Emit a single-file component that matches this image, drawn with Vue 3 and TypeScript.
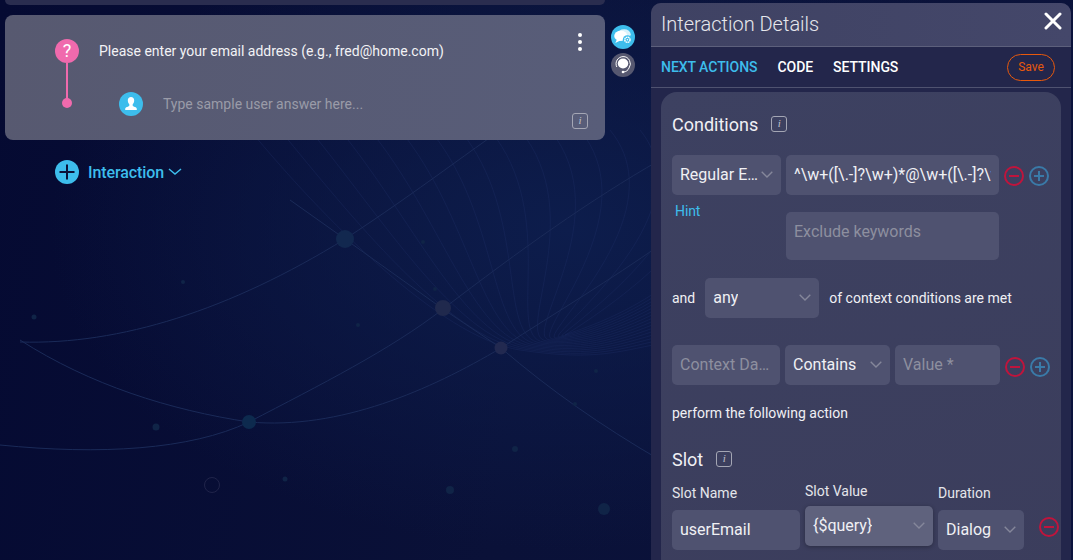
<script setup lang="ts">
// thin mesh of lines sweeping down to the right behind the page
const meshLines = Array.from({ length: 16 }, (_, i) => {
  const x = 250 + i * 30
  return `M${x} 130 C ${x + 70} 215 ${440 + i * 8} 338 ${520 + i * 3} ${350 - i} S 620 ${350 - i * 2} 670 ${342 - i * 4}`
})

const dots = [
  { x: 450, y: 490, r: 4 },
  { x: 604, y: 509, r: 6 },
  { x: 515, y: 449, r: 3 },
  { x: 156, y: 427, r: 3.5 },
  { x: 34, y: 317, r: 2.5 },
  { x: 285, y: 479, r: 2.5 },
  { x: 183, y: 282, r: 2 },
  { x: 358, y: 325, r: 2 },
  { x: 596, y: 371, r: 2 },
  { x: 575, y: 404, r: 2 },
  { x: 423, y: 242, r: 2 },
  { x: 435, y: 289, r: 2 },
]
</script>

<template>
  <div class="page">
    <svg class="bg-art" width="1073" height="560" viewBox="0 0 1073 560" fill="none">
      <path v-for="(d, i) in meshLines" :key="i" :d="d" stroke="#22346a" stroke-width="0.6" opacity="0.5" />
      <g stroke="#1a2a58" stroke-width="1">
        <path d="M20 342 C 120 345 230 310 345 239 C 420 190 470 150 530 110" />
        <path d="M0 445 C 100 455 190 450 249 422 C 320 385 390 350 443 309 C 520 250 590 200 660 160" />
        <path d="M20 340 C 90 385 170 410 249 422 C 340 430 430 390 501 348 C 560 310 610 280 660 245" />
        <path d="M290 200 L345 239 L443 309 L501 348 C 550 390 600 425 660 460" />
      </g>
      <circle cx="345" cy="239" r="9" fill="#12284f" />
      <circle cx="443" cy="308" r="8" fill="#20294d" />
      <circle cx="501" cy="348" r="6.500" fill="#222950" />
      <circle cx="249" cy="422" r="7" fill="#0d2a4e" />
      <circle cx="212" cy="485" r="7.500" stroke="#20244a" />
      <circle v-for="(p, i) in dots" :key="i" :cx="p.x" :cy="p.y" :r="p.r" fill="#102447" />
    </svg>

    <main class="canvas">
      <div class="prev-card"></div>

      <div class="card-row">
        <section class="card">
          <div class="timeline">
            <span class="question">?</span>
            <span class="stem"></span>
            <span class="stem-dot"></span>
          </div>

          <div class="card-body">
            <p class="prompt">Please enter your email address (e.g., fred@home.com)</p>
            <div class="answer">
              <span class="avatar">
                <svg width="16" height="16" viewBox="0 0 16 16" fill="#fff">
                  <path d="M8 1c2 0 3.200 1.400 3.200 3.500 0 1.500-.7 3-1.500 3.800v1.100c0 .6 1 1 2.300 1.500 1 .4 1.800.9 1.800 2.100v1H2.200v-1c0-1.200.8-1.700 1.800-2.100 1.300-.5 2.300-.9 2.300-1.500V8.300C5.500 7.500 4.800 6 4.800 4.500 4.800 2.400 6 1 8 1z" />
                </svg>
              </span>
              <span class="answer-hint">Type sample user answer here...</span>
            </div>
          </div>

          <div class="card-tools">
            <span class="kebab"><i></i><i></i><i></i></span>
            <span class="info-box">i</span>
          </div>
        </section>

        <div class="side-icons">
          <span class="side-icon active">
            <svg width="22" height="22" viewBox="0 0 20 20">
              <ellipse cx="11" cy="7.500" rx="6" ry="4.600" fill="#fff" opacity="0.8" />
              <ellipse cx="8" cy="9" rx="6" ry="4.600" fill="#fff" />
              <path d="M4.500 12 3 15.500l5-2.500z" fill="#fff" />
              <circle cx="14" cy="12.500" r="4.200" fill="#3dbdec" />
              <circle cx="14" cy="12.500" r="2.400" fill="none" stroke="#fff" stroke-width="1.300" stroke-dasharray="1.500 0.400" />
              <circle cx="14" cy="12.500" r="0.700" fill="#fff" />
            </svg>
          </span>
          <span class="side-icon">
            <svg width="20" height="20" viewBox="0 0 20 20" fill="none">
              <ellipse cx="10" cy="8.500" rx="5.200" ry="5" fill="#fff" />
              <path d="M3.800 12A7.200 7.200 0 0 1 10 1.600" stroke="#fff" stroke-width="1" />
              <path d="M10 1.600A7.200 7.200 0 0 1 16 13c-1 2.500-3 3.800-5.500 4" stroke="#fff" stroke-width="1" />
              <circle cx="10" cy="17" r="1.300" fill="#fff" />
            </svg>
          </span>
        </div>
      </div>

      <div class="add-row">
        <span class="add-btn">
          <svg width="16" height="16" viewBox="0 0 16 16" stroke="#0b1238" stroke-width="2">
            <path d="M8 0.500v15M0.500 8h15" />
          </svg>
        </span>
        <span class="add-label">Interaction</span>
        <svg width="14" height="8" viewBox="0 0 14 8" fill="none" stroke="#3dbdec" stroke-width="1.500">
          <path d="M1 1l6 5 6-5" />
        </svg>
      </div>
    </main>

    <aside class="panel">
      <header class="panel-head">
        <h1>Interaction Details</h1>
        <svg class="close" width="18" height="18" viewBox="0 0 18 18" stroke="#fff" stroke-width="3" stroke-linecap="round">
          <path d="M2 2l14 14M16 2L2 16" />
        </svg>
      </header>

      <nav class="tabs">
        <a class="tab current">NEXT ACTIONS</a>
        <a class="tab">CODE</a>
        <a class="tab">SETTINGS</a>
        <button class="save">Save</button>
      </nav>

      <div class="sheet">
        <h2 class="heading conditions">Conditions <span class="info-box">i</span></h2>

        <div class="row regex-row">
          <div class="select type-select">
            <span class="select-text">Regular Expression</span>
            <svg class="chev" width="12" height="7" viewBox="0 0 12 7" fill="none"><path d="M.7 .7L6 6l5.300-5.300" /></svg>
          </div>
          <input class="field regex" value="^\w+([\.-]?\w+)*@\w+([\.-]?\w+)*(\.\w{2,3})+$" readonly />
          <span class="round minus"></span>
          <span class="round plus"></span>
        </div>

        <div class="hint-row">
          <a class="hint">Hint</a>
          <input class="field exclude" placeholder="Exclude keywords" readonly />
        </div>

        <div class="row and-row">
          <span class="small">and</span>
          <div class="select any-select">
            <span class="select-text">any</span>
            <svg class="chev" width="12" height="7" viewBox="0 0 12 7" fill="none"><path d="M.7 .7L6 6l5.300-5.300" /></svg>
          </div>
          <span class="small">of context conditions are met</span>
        </div>

        <div class="row context-row">
          <input class="field context" placeholder="Context Data *" readonly />
          <div class="select contains">
            <span class="select-text">Contains</span>
            <svg class="chev" width="12" height="7" viewBox="0 0 12 7" fill="none"><path d="M.7 .7L6 6l5.300-5.300" /></svg>
          </div>
          <input class="field value" placeholder="Value *" readonly />
          <span class="round minus"></span>
          <span class="round plus"></span>
        </div>

        <p class="small perform">perform the following action</p>

        <h2 class="heading slot">Slot <span class="info-box">i</span></h2>

        <div class="slot-row">
          <label class="slot-col name">
            <span class="slot-label">Slot Name</span>
            <input class="field" value="userEmail" readonly />
          </label>
          <div class="slot-col raised">
            <span class="slot-label">Slot Value</span>
            <div class="select">
              <span class="select-text">{$query}</span>
              <svg class="chev" width="12" height="7" viewBox="0 0 12 7" fill="none"><path d="M.7 .7L6 6l5.300-5.300" /></svg>
            </div>
          </div>
          <div class="slot-col duration">
            <span class="slot-label">Duration</span>
            <div class="select">
              <span class="select-text">Dialog</span>
              <svg class="chev" width="12" height="7" viewBox="0 0 12 7" fill="none"><path d="M.7 .7L6 6l5.300-5.300" /></svg>
            </div>
          </div>
          <span class="round minus"></span>
        </div>
      </div>
    </aside>
  </div>
</template>

<style>
html,
body {
  margin: 0;
  background: #080f38;
}
</style>

<style scoped>
.page {
  position: relative;
  display: flex;
  width: 1073px;
  height: 560px;
  overflow: hidden;
  font-family: Roboto, "Liberation Sans", sans-serif;
  color: #fff;
  background:
    radial-gradient(520px 320px at 570px 230px, #0d1d4c 0%, rgba(13, 29, 76, 0) 100%),
    linear-gradient(100deg, #050a32 0%, #0a1138 50%, #0b133c 100%);
}

.bg-art {
  position: absolute;
  inset: 0;
}

.canvas {
  position: relative;
  width: 651px;
  flex: none;
  padding-left: 5px;
  box-sizing: border-box;
}

.prev-card {
  width: 600px;
  height: 5px;
  background: #2a2d4f;
  border-radius: 0 0 8px 8px;
}

.card-row {
  display: flex;
  gap: 6px;
  margin-top: 10px;
}

.card {
  display: flex;
  width: 600px;
  height: 125px;
  padding: 24px 0 0 50px;
  box-sizing: border-box;
  background: linear-gradient(100deg, #575970, #585d79);
  border-radius: 8px;
}

.timeline {
  display: flex;
  flex-direction: column;
  align-items: center;
  width: 24px;
  margin-right: 20px;
}

.question {
  width: 24px;
  height: 24px;
  flex: none;
  border-radius: 50%;
  background: #f06aad;
  font-size: 18px;
  line-height: 24px;
  text-align: center;
}

.stem {
  width: 1.500px;
  height: 36px;
  background: #f06aad;
}

.stem-dot {
  width: 10px;
  height: 10px;
  margin-top: -1px;
  border-radius: 50%;
  background: #f06aad;
}

.card-body {
  flex: 1;
}

.prompt {
  margin: 0;
  font-size: 14px;
  line-height: 24px;
  color: #f2f2f5;
}

.answer {
  display: flex;
  align-items: center;
  gap: 20px;
  margin-top: 29px;
  padding-left: 20px;
}

.avatar {
  display: flex;
  align-items: center;
  justify-content: center;
  width: 24px;
  height: 24px;
  border-radius: 50%;
  background: #3dbdec;
}

.answer-hint {
  font-size: 14px;
  color: #9a9ba8;
}

.card-tools {
  display: flex;
  flex-direction: column;
  align-items: center;
  justify-content: space-between;
  width: 16px;
  height: 96px;
  margin: -6px 17px 0 0;
}

.kebab {
  display: flex;
  flex-direction: column;
  gap: 3px;
}

.kebab i {
  width: 4px;
  height: 4px;
  border-radius: 50%;
  background: #fff;
}

.info-box {
  display: inline-block;
  box-sizing: border-box;
  width: 16px;
  height: 16px;
  border: 1.500px solid #a4a6b4;
  border-radius: 3px;
  font: italic 400 11px/13px "Liberation Serif", serif;
  color: #c0c1cb;
  text-align: center;
}

.side-icons {
  display: flex;
  flex-direction: column;
  gap: 4px;
  padding-top: 10px;
}

.side-icon {
  display: flex;
  align-items: center;
  justify-content: center;
  width: 24px;
  height: 24px;
  border-radius: 50%;
  background: #565870;
}

.side-icon.active {
  background: #3dbdec;
}

.add-row {
  display: flex;
  align-items: center;
  margin: 20px 0 0 50px;
  color: #3dbdec;
}

.add-btn {
  display: flex;
  align-items: center;
  justify-content: center;
  width: 24px;
  height: 24px;
  border-radius: 50%;
  background: #3dbdec;
  margin-right: 9px;
}

.add-label {
  font-size: 16px;
  font-weight: 500;
  margin-right: 4px;
  letter-spacing: -0.1px;
}

.panel {
  position: relative;
  width: 420px;
  margin-top: 3px;
  flex: none;
  background: #23264b;
  border-radius: 10px 10px 0 0;
}

.panel-head {
  display: flex;
  align-items: flex-start;
  justify-content: space-between;
  box-sizing: border-box;
  height: 44px;
  padding: 9px 9px 0 10px;
  background: linear-gradient(90deg, #3f4263, #44476a);
  border-bottom: 1px solid #5d607c;
  border-radius: 10px 10px 0 0;
}

.panel-head h1 {
  margin: 0;
  font-size: 20px;
  line-height: 24px;
  font-weight: 300;
  color: #e6e7ec;
}

.tabs {
  display: flex;
  align-items: center;
  gap: 20px;
  height: 40px;
  padding: 0 16px 0 10px;
  border-bottom: 1px solid #4f5270;
}

.tab {
  font-size: 14px;
  font-weight: 500;
  letter-spacing: -0.05px;
}

.tab.current {
  color: #3dbdec;
}

.save {
  width: 48px;
  height: 27px;
  margin-left: auto;
  padding: 0;
  background: none;
  border: 1px solid #e8590c;
  border-radius: 14px;
  color: #e8590c;
  font: 400 12px Roboto, sans-serif;
}

.sheet {
  height: 500px;
  margin: 4px 10px 0;
  padding: 1px 11px;
  background: linear-gradient(160deg, #3d4161, #3b3d5c);
  border-radius: 16px 16px 0 0;
}

.heading {
  display: flex;
  align-items: center;
  margin: 0;
  font-size: 18px;
  font-weight: 400;
  color: #f0f0f4;
}

.conditions {
  gap: 13px;
  margin-top: 20px;
  height: 22px;
}

.slot {
  gap: 13px;
  margin-top: 27px;
  height: 22px;
}

.row {
  display: flex;
  align-items: center;
}

.field,
.select {
  height: 40px;
  box-sizing: border-box;
  background: #4f5270;
  border: 0;
  border-radius: 5px;
  font: 400 16px Roboto, sans-serif;
  color: #f0f0f4;
}

.field {
  padding: 0 8px 1px;
  outline: none;
  text-overflow: ellipsis;
}

.field::placeholder {
  color: #8d8f9f;
  opacity: 1;
}

.select {
  display: flex;
  align-items: center;
  justify-content: space-between;
  padding: 0 8px 1px;
}

.select-text {
  overflow: hidden;
  white-space: nowrap;
  text-overflow: ellipsis;
}

.chev {
  flex: none;
  margin-left: 4px;
  stroke: #85879a;
  stroke-width: 1.400;
}

.regex-row {
  margin-top: 20px;
}

.type-select {
  width: 109px;
}

.type-select .chev {
  margin-left: 1px;
}

.regex {
  width: 213px;
  margin-left: 5px;
  text-overflow: clip;
}

.round {
  position: relative;
  flex: none;
  width: 20px;
  height: 20px;
  margin-left: 5px;
  box-sizing: border-box;
  border: 2px solid #c0143c;
  border-radius: 50%;
}

.round::before,
.round.plus::after {
  content: "";
  position: absolute;
  left: 3px;
  right: 3px;
  top: 7px;
  height: 2px;
  background: #c0143c;
}

.round.plus {
  border-color: #3a7aa8;
}

.round.plus::before,
.round.plus::after {
  background: #3a7aa8;
}

.round.plus::after {
  transform: rotate(90deg);
}

.regex-row .round {
  margin-top: 2px;
}

.context-row .round {
  margin-top: 4px;
}

.hint-row {
  display: flex;
  align-items: flex-start;
  margin-top: 9px;
  padding-left: 3px;
}

.hint {
  width: 111px;
  font-size: 14px;
  line-height: 15px;
  letter-spacing: -0.1px;
  color: #3dbdec;
}

.exclude {
  width: 213px;
  height: 48px;
  margin-top: 8px;
  padding-bottom: 10px;
}

.and-row {
  margin-top: 18px;
}

.small {
  margin: 0;
  font-size: 14px;
  color: #f0f0f4;
}

.any-select {
  width: 114px;
  margin: 0 10px 0 10px;
}

.context-row {
  margin-top: 27px;
}

.context {
  width: 108px;
}

.contains {
  width: 105px;
  margin-left: 5px;
}

.value {
  width: 105px;
  margin-left: 5px;
}

.perform {
  margin-top: 20px;
  line-height: 16px;
}

.slot-row {
  display: flex;
  align-items: flex-start;
  gap: 5px;
  margin-top: 15px;
  margin-right: -9px;
}

.slot-col {
  display: flex;
  flex: none;
  flex-direction: column;
  gap: 9px;
  width: 128px;
}

.slot-col .field {
  width: 100%;
}

.slot-label {
  font-size: 14px;
  line-height: 16px;
  color: #e4e5ea;
}

.raised {
  margin-top: -2px;
  gap: 7px;
}

.raised .select {
  background: #5f627d;
  box-shadow: 0 1px 4px rgba(0, 0, 0, 0.3);
}

.duration {
  width: 86px;
}

.slot-row .round {
  margin: 32px 0 0 10px;
}
</style>
